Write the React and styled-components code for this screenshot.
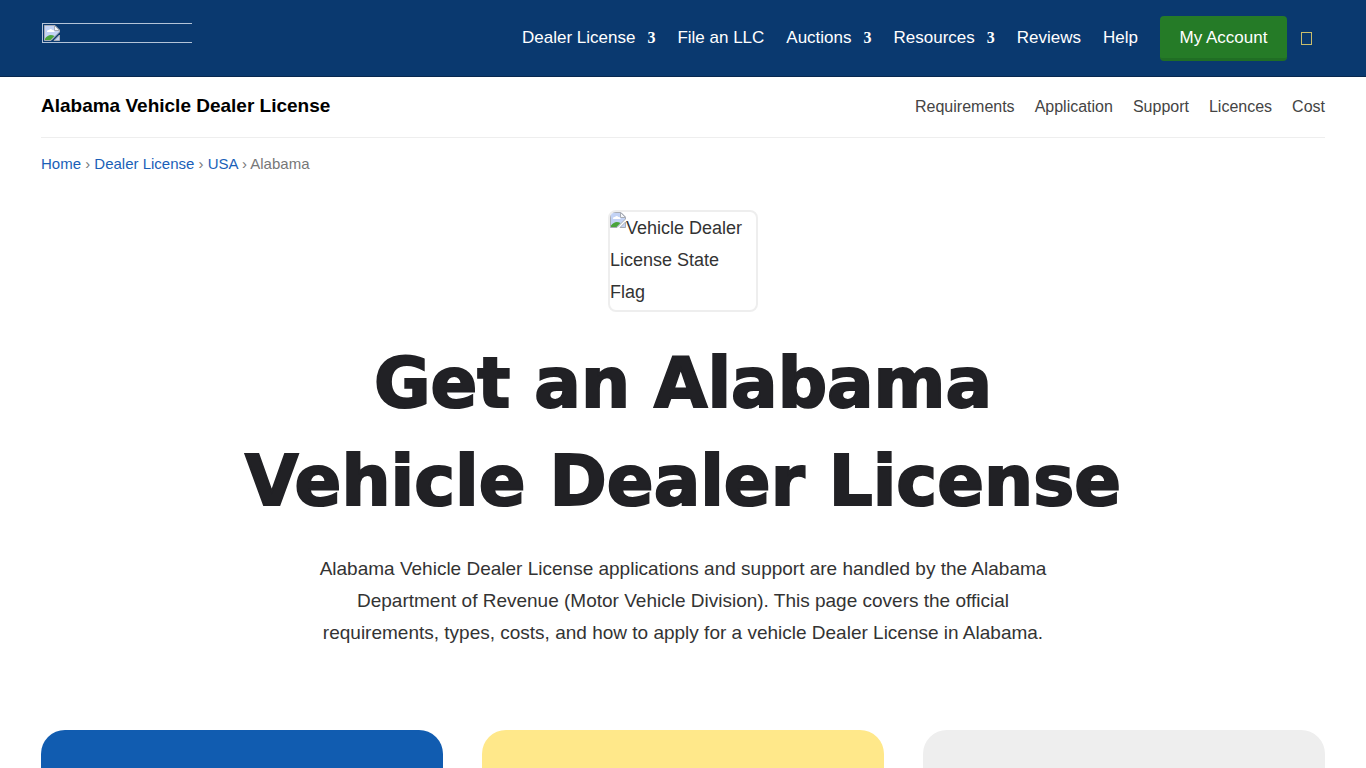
import React from "react";
import styled, { createGlobalStyle } from "styled-components";

const GlobalStyle = createGlobalStyle`
  *, *::before, *::after { box-sizing: border-box; }
  body {
    margin: 0;
    background: #fff;
    color: #333;
    font-family: "Liberation Sans", Arial, sans-serif;
    font-size: 18px;
    line-height: 32px;
  }
  a { color: inherit; text-decoration: none; }
`;

const Container = styled.div`
  width: 94%;
  margin: 0 auto;
`;

const Header = styled.header`
  background: #0a396f;
  border-bottom: 1px solid #08284f;
`;

const HeaderRow = styled(Container)`
  display: flex;
  align-items: center;
  justify-content: space-between;
  height: 76px;
`;

const LogoLink = styled.a`
  display: flex;
  width: 150px;
  height: 20px;
  margin: 0 0 10px 1px;
  padding: 1px;
  border: 1px solid #b4c4d8;
  border-right: 0;
`;

const MainNav = styled.nav`
  display: flex;
  align-items: center;
  gap: 22px;
  padding-right: 13px;
  color: #fff;
  font-size: 17px;
  line-height: 24px;
`;

const NavLink = styled.a`
  display: flex;
  align-items: center;
  gap: 12px;
`;

const Caret = styled.span`
  font-family: "Liberation Serif", serif;
  font-size: 16px;
  font-weight: 700;
`;

const AccountGroup = styled.div`
  display: flex;
  align-items: center;
  gap: 14px;
`;

const AccountButton = styled.button`
  min-width: 127px;
  height: 45px;
  padding: 2px 18px 0;
  border: 0;
  border-bottom: 3px solid #206e24;
  border-radius: 4px;
  background: #257b27;
  color: #fff;
  font: inherit;
  cursor: pointer;
`;

const IconButton = styled.button`
  width: 11px;
  height: 13px;
  padding: 0;
  border: 1px solid #c9bd6c;
  background: transparent;
`;

const SubHeader = styled.div`
  display: flex;
  align-items: center;
  justify-content: space-between;
  height: 61px;
  padding-bottom: 3px;
  border-bottom: 1px solid #eee;
`;

const PageName = styled.strong`
  color: #000;
  font-size: 19px;
`;

const SectionNav = styled.nav`
  display: flex;
  gap: 20px;
  padding-top: 2px;
  color: #444;
  font-size: 16px;
`;

const Breadcrumbs = styled.nav`
  padding-top: 10px;
  color: #777;
  font-size: 15px;

  a { color: #1a5fb8; }
`;

const Hero = styled.section`
  display: flex;
  flex-direction: column;
  align-items: center;
  padding: 30px 0 81px;
  text-align: center;
`;

const Flag = styled.div`
  width: 150px;
  height: 102px;
  border: 2px solid #eee;
  border-radius: 8px;
  overflow: hidden;
  text-align: left;

  svg { vertical-align: top; }
`;

const Title = styled.h1`
  max-width: 900px;
  margin: 22px 0 23px;
  color: #212125;
  font-family: "Arial Black", "DejaVu Sans", sans-serif;
  font-size: 69px;
  font-weight: 900;
  line-height: 98px;
  -webkit-text-stroke: 2px #212125;
`;

const Intro = styled.p`
  max-width: 740px;
  margin: 0;
  font-size: 19px;
`;

const Cards = styled.div`
  display: grid;
  grid-template-columns: repeat(3, 1fr);
  gap: 39px;
`;

const Card = styled.article`
  min-height: 320px;
  border-radius: 24px;
  background: ${(p) => p.$color};
`;

function MissingImage() {
  return (
    <svg width="16" height="16" viewBox="0 0 16 16" aria-hidden="true">
      <path d="M0.5 0.5H11L15.5 5V7L7 15.5H0.5Z" fill="#c3d3f5" stroke="#a9adb5" />
      <path d="M3 7Q2.600 4.800 5 5Q6.500 2.800 8.500 5Q11 5 10.500 7Z" fill="#fff" />
      <path d="M1 15V13.500Q5 8 10.500 11L6.500 15Z" fill="#4aa43c" />
      <path d="M10.500 0.500V5.500H15.500Z" fill="#f4f6fa" stroke="#a9adb5" />
      <path d="M15.500 10V15.500H10Z" fill="#c3d3f5" stroke="#a9adb5" />
    </svg>
  );
}

const mainLinks = [
  { label: "Dealer License", menu: true },
  { label: "File an LLC" },
  { label: "Auctions", menu: true },
  { label: "Resources", menu: true },
  { label: "Reviews" },
  { label: "Help" },
];

const sectionLinks = ["Requirements", "Application", "Support", "Licences", "Cost"];
const cardColors = ["#115cb0", "#ffe88a", "#eee"];

export default function App() {
  return (
    <>
      <GlobalStyle />
      <Header>
        <HeaderRow>
          <LogoLink href="#" aria-label="Home page">
            <MissingImage />
          </LogoLink>
          <MainNav aria-label="Main">
            {mainLinks.map(({ label, menu }) => (
              <NavLink href="#" key={label}>
                {label}
                {menu && <Caret>3</Caret>}
              </NavLink>
            ))}
            <AccountGroup>
              <AccountButton type="button">My Account</AccountButton>
              <IconButton type="button" aria-label="Search" />
            </AccountGroup>
          </MainNav>
        </HeaderRow>
      </Header>
      <Container as="main">
        <SubHeader>
          <PageName>Alabama Vehicle Dealer License</PageName>
          <SectionNav aria-label="Sections">
            {sectionLinks.map((label) => (
              <a href="#" key={label}>{label}</a>
            ))}
          </SectionNav>
        </SubHeader>
        <Breadcrumbs aria-label="Breadcrumb">
          <a href="#">Home</a> › <a href="#">Dealer License</a> › <a href="#">USA</a> › Alabama
        </Breadcrumbs>
        <Hero>
          <Flag>
            <MissingImage />
            Vehicle Dealer License State Flag
          </Flag>
          <Title>Get an Alabama Vehicle Dealer License</Title>
          <Intro>
            Alabama Vehicle Dealer License applications and support are handled by the Alabama
            Department of Revenue (Motor Vehicle Division). This page covers the official
            requirements, types, costs, and how to apply for a vehicle Dealer License in Alabama.
          </Intro>
        </Hero>
        <Cards>
          {cardColors.map((color) => (
            <Card key={color} $color={color} />
          ))}
        </Cards>
      </Container>
    </>
  );
}
